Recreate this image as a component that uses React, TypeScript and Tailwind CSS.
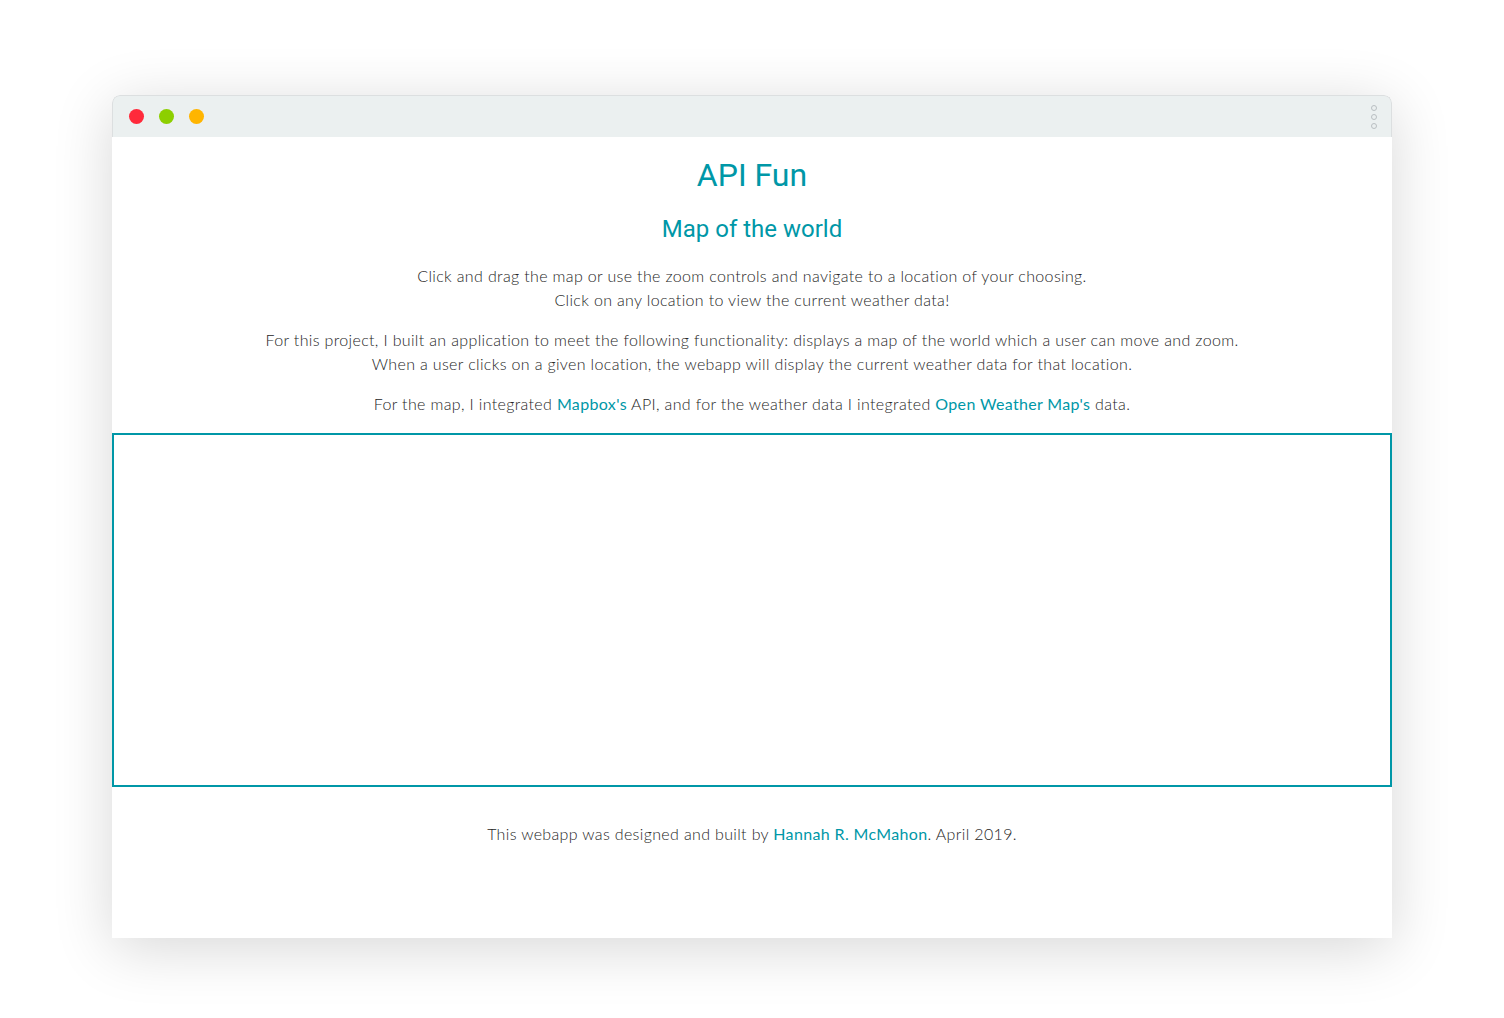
import React from "react";

const teal = "text-[#0097a7]";

const Link = ({ children }: { children: React.ReactNode }) => (
  <a className={`${teal} font-normal`} href="#">
    {children}
  </a>
);

export default function App() {
  return (
    <div className="flex h-[1018px] w-full justify-center bg-white pt-[95px]">
      <div className="flex h-[843px] w-[1280px] flex-col overflow-hidden rounded-t-lg bg-white shadow-[0_10px_60px_rgba(0,0,0,0.16)]">
        <div className="flex h-[42px] shrink-0 items-center justify-between rounded-t-lg border border-b-0 border-[#dcdfe0] bg-[#ebf0f0] pl-[16px] pr-[14px]">
          <div className="flex items-center gap-[15px]">
            <span className="h-[15px] w-[15px] rounded-full bg-[#ff2a3b]" />
            <span className="h-[15px] w-[15px] rounded-full bg-[#8dcf00]" />
            <span className="h-[15px] w-[15px] rounded-full bg-[#ffb500]" />
          </div>
          <div className="flex flex-col gap-[3px]">
            <span className="h-[6px] w-[6px] rounded-full border border-[#b9bfc2]" />
            <span className="h-[6px] w-[6px] rounded-full border border-[#b9bfc2]" />
            <span className="h-[6px] w-[6px] rounded-full border border-[#b9bfc2]" />
          </div>
        </div>

        <div className="flex flex-1 flex-col font-['Lato',sans-serif] text-[16px] font-light tracking-[0.35px] text-[#262626]">
          <h1 className={`mt-[20px] text-center font-['Roboto',sans-serif] text-[32px] font-normal leading-[36px] tracking-normal ${teal}`}>
            API Fun
          </h1>
          <h2 className={`mt-[22px] text-center font-['Roboto',sans-serif] text-[24px] font-normal leading-[28px] tracking-normal ${teal}`}>
            Map of the world
          </h2>
          <p className="mt-[21px] text-center leading-[24px]">
            Click and drag the map or use the zoom controls and navigate to a location of your choosing.
            <br />
            Click on any location to view the current weather data!
          </p>
          <p className="mt-[16px] text-center leading-[24px]">
            For this project, I built an application to meet the following functionality: displays a map of the world which a user can move and zoom.
            <br />
            When a user clicks on a given location, the webapp will display the current weather data for that location.
          </p>
          <p className="mt-[16px] text-center leading-[24px]">
            For the map, I integrated <Link>Mapbox's</Link> API, and for the weather data I integrated{" "}
            <Link>Open Weather Map's</Link> data.
          </p>

          <div className="mt-[17px] h-[354px] w-full shrink-0 border-2 border-[#0097a7] bg-white" />

          <p className="mt-[35px] text-center leading-[24px]">
            This webapp was designed and built by <Link>Hannah R. McMahon</Link>. April 2019.
          </p>
        </div>
      </div>
    </div>
  );
}
